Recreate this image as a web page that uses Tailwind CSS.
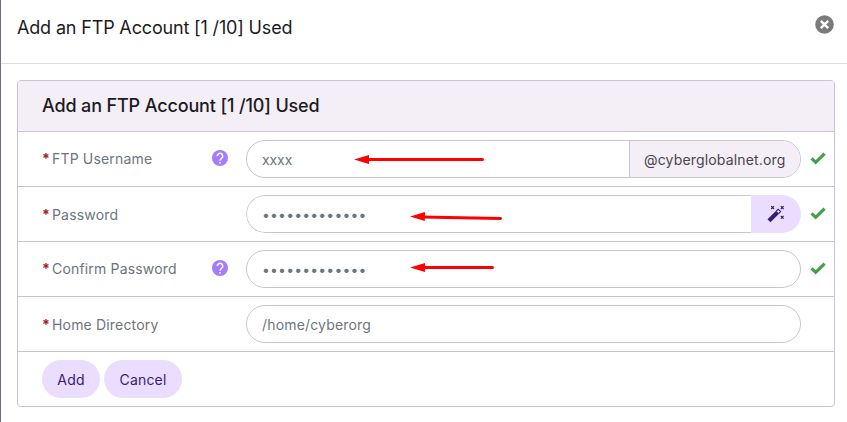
<!DOCTYPE html>
<html lang="en">
<head>
<meta charset="utf-8">
<title>Add an FTP Account</title>
<script src="https://cdn.jsdelivr.net/npm/@tailwindcss/browser@4"></script>
</head>
<body class="bg-white font-['Inter',sans-serif] text-sm tracking-[0.17px] text-[#6c757d]">
<svg width="0" height="0" class="absolute">
  <defs>
    <symbol id="help" viewBox="0 0 16 16"><circle cx="8" cy="8" r="8" fill="#a37cff"/><path d="M5.300 6.100a2.700 2.700 0 1 1 4.500 1.900C8.700 9 8 9.300 8 10.800" fill="none" stroke="#fff" stroke-width="1.500"/><rect x="7.200" y="12" width="1.600" height="1.600" fill="#fff"/></symbol>
    <symbol id="check" viewBox="0 0 16 14"><path d="M1.600 6.400 5.700 10.300 14.600 1.700" fill="none" stroke="#43a047" stroke-width="3.200"/></symbol>
  </defs>
</svg>
<div class="relative h-[422px] w-[847px] overflow-hidden border-l border-[#6b7080]">
  <header class="flex h-16 items-center justify-between border-b border-[#dddddf] pr-[13px] pl-4">
    <h1 class="-mt-[7px] text-[18px] leading-6 tracking-[-0.16px] text-[#1c1b1f]">Add an FTP Account [1 /10] Used</h1>
    <svg class="-mt-[14px] size-[19px]" viewBox="0 0 19 19"><circle cx="9.500" cy="9.500" r="9.300" fill="#7b7b7b"/><path d="m5.800 5.800 7.400 7.400m0-7.400-7.400 7.400" stroke="#fff" stroke-width="2.400"/></svg>
  </header>
  <main class="mx-4 mt-4 w-[818px] overflow-hidden rounded border border-[#c9c5d0]">
    <h2 class="flex h-[51px] items-center border-b border-[#c9c5d0] bg-[#f4eef7] pl-6 text-[18px] font-medium tracking-[-0.14px] text-[#1c1b1f]">Add an FTP Account [1 /10] Used</h2>
    <div class="flex h-[55px] items-center border-b border-[#c9c5d0]">
      <label class="flex w-[194px] gap-1 pl-6"><b class="w-1.5 text-[#a61b2b]">*</b><span>FTP Username</span></label>
      <svg class="size-4 -translate-y-px"><use href="#help"/></svg>
      <div class="ml-[18px] flex h-[38px] w-[555px] items-center overflow-hidden rounded-full border border-[#c9c5d0]">
        <span class="flex-1 pt-0.5 pl-[15px] tracking-[-0.1px]">xxxx</span>
        <span class="flex h-full w-[171px] items-center border-l border-[#c9c5d0] bg-[#f4eef7] pt-0.5 pl-[14px] text-[#49454f]">@cyberglobalnet.org</span>
      </div>
      <svg class="ml-[9px] h-[14px] w-4"><use href="#check"/></svg>
    </div>
    <div class="flex h-[55px] items-center border-b border-[#c9c5d0]">
      <label class="flex w-[228px] gap-1 pt-0.5 pl-6"><b class="w-1.5 text-[#a61b2b]">*</b><span>Password</span></label>
      <div class="flex h-[38px] w-[555px] items-center overflow-hidden rounded-full">
        <div class="flex h-full flex-1 items-center rounded-l-full border border-r-0 border-[#c9c5d0] pt-0.5 pl-[15px]">•••••••••••••</div>
        <div class="flex h-full w-[50px] items-center justify-center bg-[#eaddff]">
          <svg class="size-[18px]" viewBox="0 0 18 18" fill="none" stroke="#381e72"><path d="m2 15.800 8.600-8.600" stroke-width="4.200"/><path d="m9.300 6 1.900-1.800 2.400 2.400-1.900 1.900" stroke-width="1.100"/><path d="m4.200 1.200 2.800 2.800m0-2.800-2.800 2.800m9.600-2.800 2.800 2.800m0-2.800-2.800 2.800m0 6.800 2.800 2.800m0-2.800-2.800 2.800" stroke-width="1.200"/></svg>
        </div>
      </div>
      <svg class="ml-[9px] h-[14px] w-4"><use href="#check"/></svg>
    </div>
    <div class="flex h-[55px] items-center border-b border-[#c9c5d0]">
      <label class="flex w-[194px] gap-1 pl-6"><b class="w-1.5 text-[#a61b2b]">*</b><span>Confirm Password</span></label>
      <svg class="size-4 -translate-y-px"><use href="#help"/></svg>
      <div class="ml-[18px] flex h-[38px] w-[555px] items-center rounded-full border border-[#c9c5d0] pt-0.5 pl-[15px]">•••••••••••••</div>
      <svg class="ml-[9px] h-[14px] w-4"><use href="#check"/></svg>
    </div>
    <div class="flex h-[55px] items-center border-b border-[#c9c5d0]">
      <label class="flex w-[228px] gap-1 pt-0.5 pl-6"><b class="w-1.5 text-[#a61b2b]">*</b><span>Home Directory</span></label>
      <div class="flex h-[38px] w-[555px] items-center rounded-full border border-[#c9c5d0] pt-0.5 pl-[15px]">/home/cyberorg</div>
    </div>
    <div class="flex h-[54px] items-center gap-1 pl-6 text-[#381e72]">
      <button class="h-[38px] w-[58px] rounded-full bg-[#eaddff] pt-0.5">Add</button>
      <button class="h-[38px] w-[78px] rounded-full bg-[#eaddff] pt-0.5">Cancel</button>
    </div>
  </main>
  <svg class="pointer-events-none absolute top-0 -left-px" width="847" height="422" fill="red" stroke="red" stroke-linecap="round">
    <path d="M366 159.500H482.500M422 217 500.500 218.500M422 267.500H492.500" stroke-width="3"/>
    <path d="m354 159.500 15-4.500v9zM410 216.500l15-4.500-.2 9zM410 267.500l15-4.500v9z" stroke="none"/>
  </svg>
</div>
</body>
</html>
